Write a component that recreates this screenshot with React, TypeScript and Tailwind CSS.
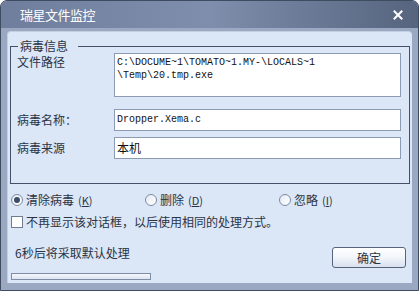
import React from 'react';

const cjk = "font-['SimSun','Noto_Sans_CJK_SC',sans-serif]";

const Radio = ({ checked }: { checked?: boolean }) => (
  <span className="w-[12px] h-[12px] rounded-full border border-[#7d8ba3] bg-gradient-to-br from-[#e6ebf3] to-white flex items-center justify-center shrink-0">
    {checked && <span className="w-[6px] h-[6px] rounded-full bg-[#3d4d66]" />}
  </span>
);

const Hotkey = ({ k }: { k: string }) => (
  <span className="ml-[4px] text-[11px]">
    (<span className="underline">{k}</span>)
  </span>
);

const App = () => {
  return (
    <div className={`w-[419px] h-[291px] flex flex-col bg-[#9aa8c1] border border-[#3f4b5f] rounded-t-[7px] overflow-hidden ${cjk} text-[12px] leading-none`}>
      {/* title bar */}
      <div className="h-[27px] shrink-0 flex items-center justify-between pl-[19px] pr-[15px] bg-gradient-to-r from-[#6e7e9c] via-[#7e8eac] to-[#56647e] text-white text-[13px]">
        <span className="tracking-[-0.5px]">瑞星文件监控</span>
        <svg width="10" height="10" viewBox="0 0 10 10">
          <path d="M1.5 1.5 L8.5 8.5 M8.5 1.5 L1.5 8.5" stroke="#fff" strokeWidth="2" strokeLinecap="square" />
        </svg>
      </div>

      <div className="flex-1 flex flex-col mx-[6px] mt-[3px] mb-[7px] bg-[#dbe6f7] rounded-t-[4px] border-t border-l border-[#c4d0e2] text-[#2a3444]">
        {/* group box */}
        <div className="mt-[14px] mx-[2px] h-[138px] border border-[#43506a] flex flex-col px-[6px]">
          <div className="-mt-[8px] ml-[1px] w-fit px-[2px] bg-[#dbe6f7] leading-[14px]">病毒信息&nbsp;&nbsp;&nbsp;</div>

          <div className="flex">
            <div className="w-[97px] pt-[3px]">文件路径</div>
            <div className="w-[287px] h-[44px] bg-white border border-[#8c9bb1] pl-[2px] pt-[2px] font-['Liberation_Mono',monospace] text-[10px] leading-[13px] text-[#111] whitespace-pre">
              {'C:\\DOCUME~1\\TOMATO~1.MY-\\LOCALS~1\n\\Temp\\20.tmp.exe'}
            </div>
          </div>

          <div className="mt-[12px] flex items-center">
            <div className="w-[97px]">病毒名称：</div>
            <div className="w-[287px] h-[22px] bg-white border border-[#8c9bb1] pl-[2px] flex items-center font-['Liberation_Mono',monospace] text-[10px] text-[#111]">
              Dropper.Xema.c
            </div>
          </div>

          <div className="mt-[6px] flex items-center">
            <div className="w-[97px]">病毒来源</div>
            <div className="w-[287px] h-[22px] bg-white border border-[#8c9bb1] pl-[2px] flex items-center text-[#111]">
              本机
            </div>
          </div>
        </div>

        {/* radios */}
        <div className="mt-[10px] ml-[3px] flex items-center h-[12px]">
          <div className="w-[134px] flex items-center gap-[3px]">
            <Radio checked />
            <span>清除病毒<Hotkey k="K" /></span>
          </div>
          <div className="w-[134px] flex items-center gap-[3px]">
            <Radio />
            <span>删除<Hotkey k="D" /></span>
          </div>
          <div className="flex items-center gap-[3px]">
            <Radio />
            <span>忽略<Hotkey k="I" /></span>
          </div>
        </div>

        {/* checkbox */}
        <div className="mt-[10px] ml-[3px] flex items-center gap-[3px]">
          <span className="w-[12px] h-[12px] border border-[#6f7d93] bg-white shrink-0" />
          <span>不再显示该对话框，以后使用相同的处理方式。</span>
        </div>

        {/* footer */}
        <div className="mt-[19px] flex items-start justify-between pl-[7px] pr-[6px]">
          <span className="mt-[0px]">6秒后将采取默认处理</span>
          <button className="w-[74px] h-[21px] rounded-[3px] border border-[#56657d] bg-gradient-to-b from-white via-[#f2f5fa] to-[#d9e1ee] text-[#2a3444] text-[12px]">
            确定
          </button>
        </div>
        <div className="mt-[5px] ml-[3px] w-[140px] h-[7px] border border-[#7f8da6] bg-gradient-to-b from-[#f4f7fc] to-[#dfe6f2]" />
      </div>
    </div>
  );
};

export default App;
